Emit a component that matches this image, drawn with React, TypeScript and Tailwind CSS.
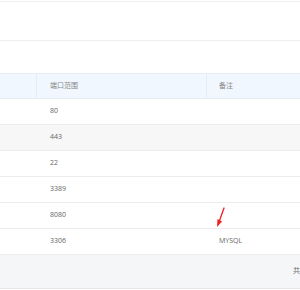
import React from 'react';

const rows = [
  { port: '80', note: '' },
  { port: '443', note: '' },
  { port: '22', note: '' },
  { port: '3389', note: '' },
  { port: '8080', note: '' },
  { port: '3306', note: 'MYSQL' },
];

const App: React.FC = () => {
  return (
    <div className="w-[300px] h-[290px] bg-white overflow-hidden text-[7px] text-[#666] antialiased" style={{ fontFamily: '"Open Sans", "Noto Sans CJK SC", sans-serif' }}>
      <div className="h-[1px]" />
      <div className="h-[40px] border-t border-b border-[#eee]" />
      <div className="h-[32px]" />

      {/* table header */}
      <div className="flex h-[26px] bg-[#f1f7fe] border-t border-b border-[#e3ecf7] text-[#888]">
        <div className="w-[37px] border-r border-[#e3ecf7]" />
        <div className="w-[170px] border-r border-[#e3ecf7] flex items-center pl-[13px]">端口范围</div>
        <div className="flex-1 flex items-center pl-[12px]">备注</div>
      </div>

      {rows.map((r, i) => (
        <div
          key={i}
          className={`relative flex h-[26px] border-b border-[#ececec] ${i === 1 ? 'bg-[#f7f7f7]' : 'bg-white'}`}
        >
          <div className="w-[37px]" />
          <div className="w-[170px] flex items-center pl-[13px]">{r.port}</div>
          <div className="flex-1 flex items-center pl-[12px]">{r.note}</div>
          {i === 4 && (
            <svg className="absolute left-[215px] top-[4px]" width="12" height="22" viewBox="0 0 12 22">
              <path d="M9 1 L4 15" stroke="#f21f1f" strokeWidth="1.3" strokeLinecap="round" />
              <path d="M2 20 L2.5 12 L7 14.5 Z" fill="#f21f1f" />
            </svg>
          )}
        </div>
      ))}

      {/* footer */}
      <div className="h-[34px] bg-[#f5f6f8] border-b border-[#e6e6e6] flex items-center pl-[293px] overflow-hidden whitespace-nowrap">
        <span>共</span>
      </div>
    </div>
  );
};

export default App;
